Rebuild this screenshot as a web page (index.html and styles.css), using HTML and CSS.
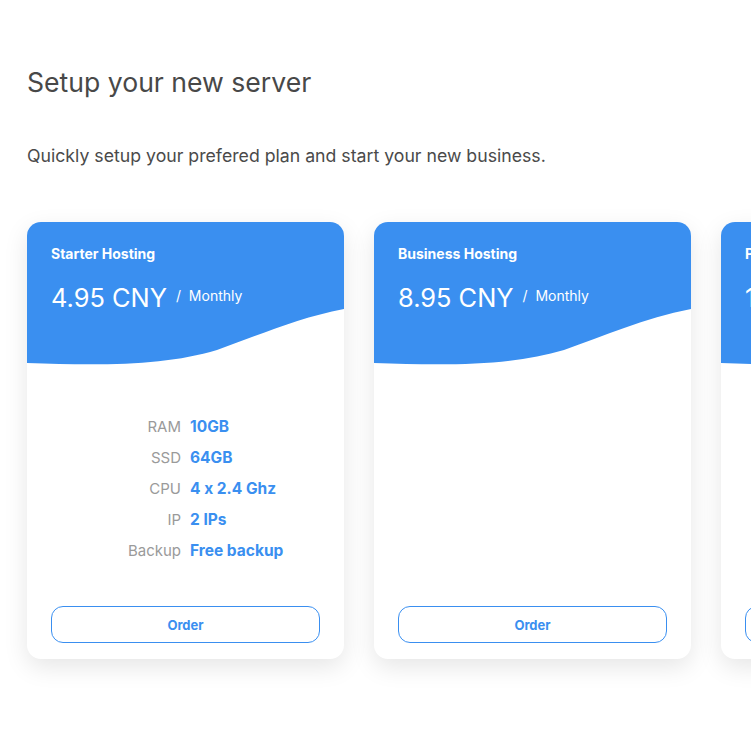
FILE: index.html
```html
<!DOCTYPE html>
<html>
<head>
<meta charset="utf-8">
<link rel="stylesheet" href="styles.css">
</head>
<body>
<div class="page">
  <h1 class="title">Setup your new server</h1>
  <p class="subtitle">Quickly setup your prefered plan and start your new business.</p>
  <div class="plans">
    <div class="card">
      <div class="card-head">
        <div class="plan-name">Starter Hosting</div>
        <div class="price-row"><span class="price">4.95 CNY</span><span class="period">/&nbsp;&nbsp;Monthly</span></div>
      </div>
      <svg class="wave" viewBox="0 0 317 57" preserveAspectRatio="none"><path d="M0 0H317V1C270 10 230 28 190 42C140 57 80 58 0 55Z" fill="#3a8ff0"/></svg>
      <div class="card-body">
        <dl class="specs">
          <dt>RAM</dt><dd>10GB</dd>
          <dt>SSD</dt><dd>64GB</dd>
          <dt>CPU</dt><dd>4 x 2.4 Ghz</dd>
          <dt>IP</dt><dd>2 IPs</dd>
          <dt>Backup</dt><dd>Free backup</dd>
        </dl>
        <button class="order">Order</button>
      </div>
    </div>
    <div class="card">
      <div class="card-head">
        <div class="plan-name">Business Hosting</div>
        <div class="price-row"><span class="price">8.95 CNY</span><span class="period">/&nbsp;&nbsp;Monthly</span></div>
      </div>
      <svg class="wave" viewBox="0 0 317 57" preserveAspectRatio="none"><path d="M0 0H317V1C270 10 230 28 190 42C140 57 80 58 0 55Z" fill="#3a8ff0"/></svg>
      <div class="card-body">
        <div class="specs empty"></div>
        <button class="order">Order</button>
      </div>
    </div>
    <div class="card">
      <div class="card-head">
        <div class="plan-name">Premium Hosting</div>
        <div class="price-row"><span class="price">12.95 CNY</span><span class="period">/&nbsp;&nbsp;Monthly</span></div>
      </div>
      <svg class="wave" viewBox="0 0 317 57" preserveAspectRatio="none"><path d="M0 0H317V1C270 10 230 28 190 42C140 57 80 58 0 55Z" fill="#3a8ff0"/></svg>
      <div class="card-body">
        <div class="specs empty"></div>
        <button class="order">Order</button>
      </div>
    </div>
  </div>
</div>
</body>
</html>
```

FILE: styles.css
```css
html, body {
  margin: 0;
  padding: 0;
  background: #ffffff;
  overflow: hidden;
}
body {
  font-family: Inter, Roboto, "Liberation Sans", sans-serif;
  font-feature-settings: "calt" 0;
  color: #4a4a4a;
}
.page {
  padding: 62px 0 0 27px;
}
.title {
  margin: 0;
  font-size: 26.6px;
  line-height: 40px;
  font-weight: 400;
  color: #484848;
}
.subtitle {
  margin: 42px 0 0;
  font-size: 17.7px;
  line-height: 24px;
  color: #4a4a4a;
}
.plans {
  display: flex;
  gap: 30px;
  margin-top: 54px;
  width: 1100px;
  padding-bottom: 60px;
}
.card {
  flex: 0 0 317px;
  height: 437px;
  background: #fff;
  border-radius: 14px;
  box-shadow: 0 8px 24px rgba(0, 0, 0, 0.10);
  overflow: hidden;
  display: flex;
  flex-direction: column;
}
.card-head {
  background: #3a8ff0;
  height: 86px;
  padding: 22px 24px 0;
  box-sizing: border-box;
  color: #fff;
}
.plan-name {
  font-size: 14px;
  line-height: 20px;
  font-weight: 700;
}
.price-row {
  margin-top: 18px;
  display: flex;
  align-items: baseline;
}
.price {
  font-size: 25.4px;
  line-height: 32px;
  font-weight: 400;
}
.period {
  font-size: 14px;
  margin-left: 9px;
  position: relative;
  top: -6px;
}
.wave {
  display: block;
  width: 317px;
  height: 57px;
}
.card-body {
  flex: 1;
  display: flex;
  flex-direction: column;
  padding: 46px 24px 16px;
}
.specs {
  flex: 1;
  margin: 0;
  display: grid;
  grid-template-columns: 130px 1fr;
  column-gap: 9px;
  grid-auto-rows: 31px;
  align-content: start;
  align-items: center;
  font-size: 15px;
}
.specs dt {
  text-align: right;
  color: #9a9a9a;
}
.specs dd {
  margin: 0;
  color: #3a8ff0;
  font-weight: 700;
  font-size: 15.5px;
}
.order {
  height: 37px;
  width: 100%;
  border: 1px solid #3a8ff0;
  border-radius: 12px;
  background: #fff;
  color: #3a8ff0;
  font-family: inherit;
  font-size: 13px;
  font-weight: 700;
}
```
